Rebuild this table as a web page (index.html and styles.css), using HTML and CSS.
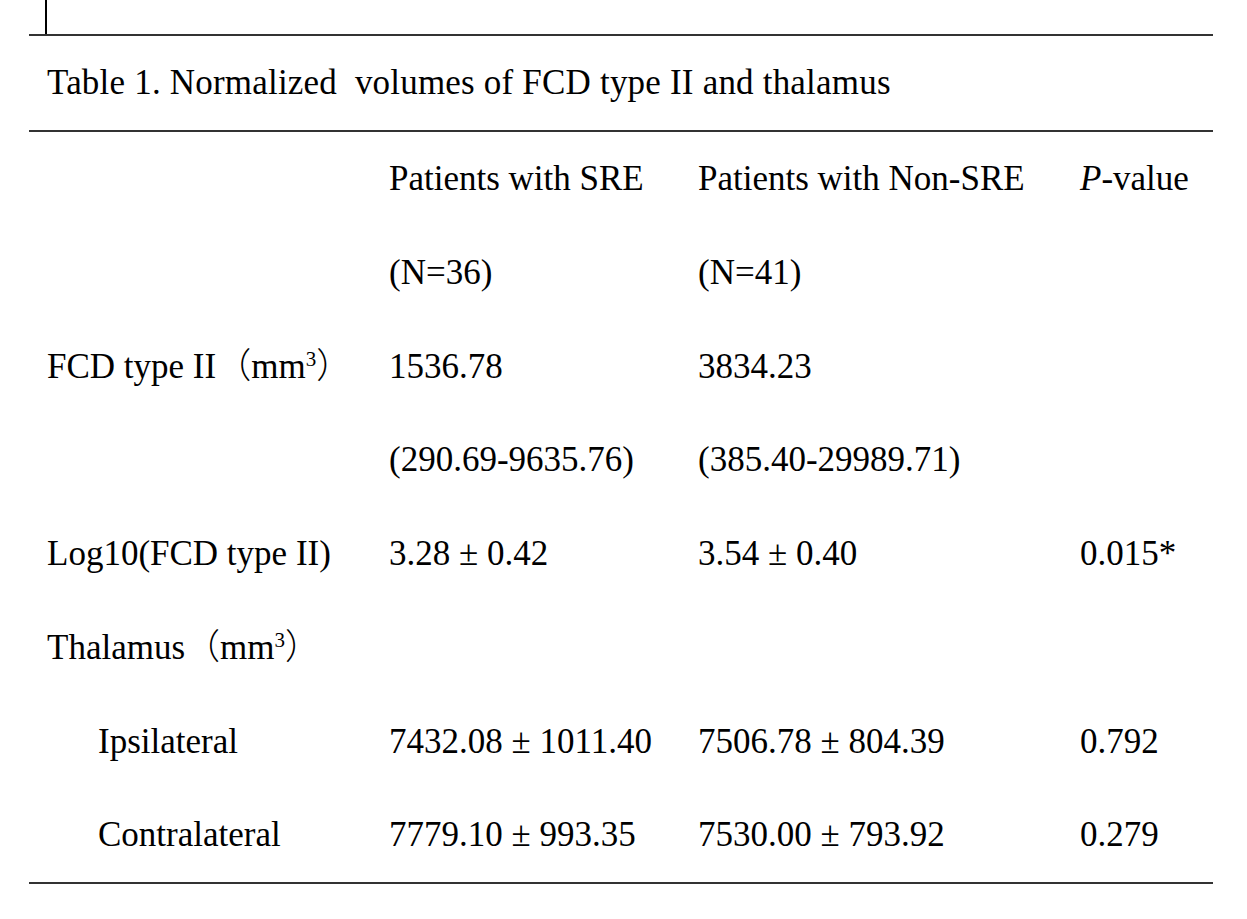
FILE: index.html
```html
<!DOCTYPE html>
<html>
<head>
<meta charset="utf-8">
<link rel="stylesheet" href="styles.css">
</head>
<body>
<div class="page">
  <div class="top"><span class="cursor"></span></div>
  <div class="rule"></div>
  <div class="caption">Table 1. Normalized&nbsp; volumes of FCD type II and thalamus</div>
  <div class="rule"></div>
  <div class="grid">
    <div class="cell c1"></div>
    <div class="cell">Patients with SRE</div>
    <div class="cell">Patients with Non-SRE</div>
    <div class="cell"><i>P</i>-value</div>

    <div class="cell c1"></div>
    <div class="cell">(N=36)</div>
    <div class="cell">(N=41)</div>
    <div class="cell"></div>

    <div class="cell c1">FCD type II<span class="cjk">（</span>mm<sup>3</sup><span class="cjk">）</span></div>
    <div class="cell">1536.78</div>
    <div class="cell">3834.23</div>
    <div class="cell"></div>

    <div class="cell c1"></div>
    <div class="cell">(290.69-9635.76)</div>
    <div class="cell">(385.40-29989.71)</div>
    <div class="cell"></div>

    <div class="cell c1">Log10(FCD type II)</div>
    <div class="cell">3.28 ± 0.42</div>
    <div class="cell">3.54 ± 0.40</div>
    <div class="cell">0.015*</div>

    <div class="cell c1">Thalamus<span class="cjk">（</span>mm<sup>3</sup><span class="cjk">）</span></div>
    <div class="cell"></div>
    <div class="cell"></div>
    <div class="cell"></div>

    <div class="cell c1 indent">Ipsilateral</div>
    <div class="cell">7432.08 ± 1011.40</div>
    <div class="cell">7506.78 ± 804.39</div>
    <div class="cell">0.792</div>

    <div class="cell c1 indent">Contralateral</div>
    <div class="cell">7779.10 ± 993.35</div>
    <div class="cell">7530.00 ± 793.92</div>
    <div class="cell">0.279</div>
  </div>
  <div class="rule"></div>
</div>
</body>
</html>
```
FILE: styles.css
```css
html, body {
  margin: 0;
  padding: 0;
  background: #ffffff;
}
body {
  font-family: "Liberation Serif", "Times New Roman", "Noto Sans CJK SC", serif;
  font-size: 35px;
  color: #000000;
}
.page {
  margin-left: 29px;
  width: 1184px;
}
.top {
  height: 34px;
  display: flex;
}
.cursor {
  width: 2px;
  height: 34px;
  margin-left: 16px;
  background: #000;
}
.rule {
  height: 2px;
  background: #333333;
}
.caption {
  height: 94px;
  line-height: 94px;
  padding-left: 18px;
  white-space: nowrap;
  letter-spacing: 0.2px;
}
.grid {
  display: grid;
  grid-template-columns: 360px 309px 382px 1fr;
  grid-auto-rows: 93.75px;
}
.cell {
  line-height: 93.75px;
  white-space: nowrap;
}
.c1 {
  padding-left: 18px;
}
.c1.indent {
  padding-left: 69px;
}
.cjk {
  font-family: "Noto Sans CJK SC", sans-serif;
  font-weight: 300;
  font-size: 35px;
  line-height: 0;
}
sup {
  font-size: 21px;
  line-height: 0;
  vertical-align: 12px;
}
```
